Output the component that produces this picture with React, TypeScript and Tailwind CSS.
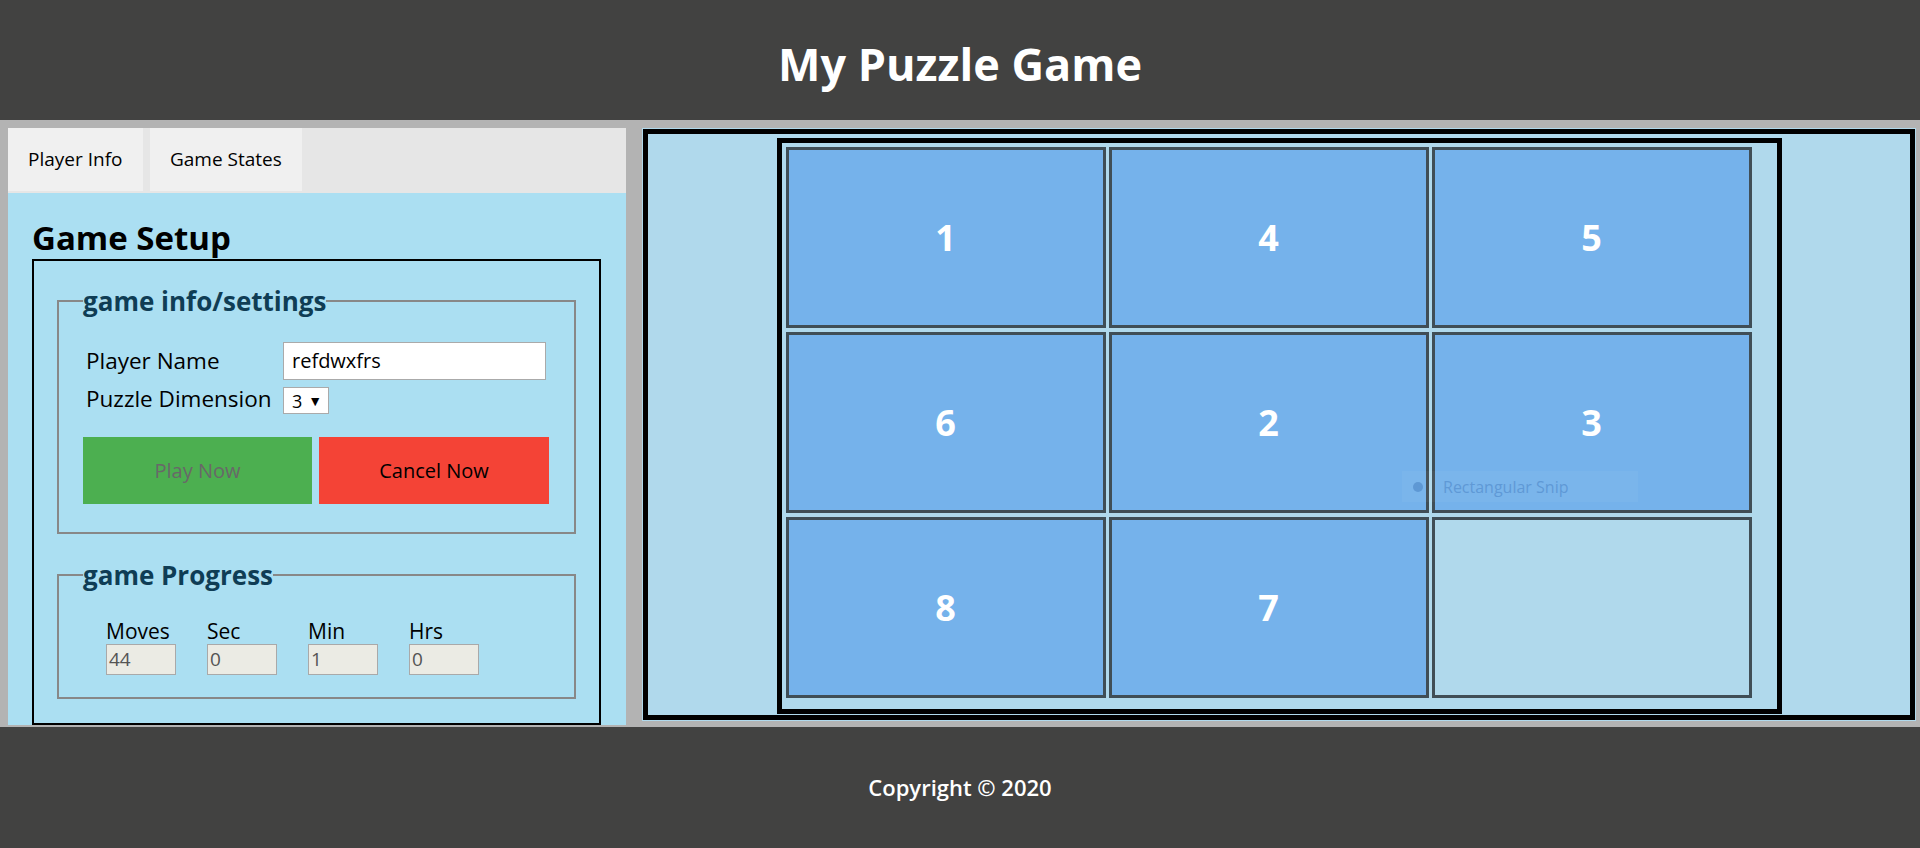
import React from 'react';

const tiles = ['1', '4', '5', '6', '2', '3', '8', '7', ''];

function Tile({ label }: { label: string }) {
  if (!label) {
    return <div className="h-[181px] border-[3px] border-[#404e56] bg-[#b0d9ec]" />;
  }
  return (
    <div className="h-[181px] border-[3px] border-[#404e56] bg-[#75b2eb] flex items-center justify-center">
      <span className="text-[36px] font-bold text-white leading-none">{label}</span>
    </div>
  );
}

function ProgressField({ label, value }: { label: string; value: string }) {
  return (
    <div className="w-[70px]">
      <div className="text-[21px] leading-[24px] text-black">{label}</div>
      <div className="mt-[1px] h-[31px] border border-[#a9a9a9] bg-[#ebebe4] px-[2px] text-[19px] leading-[29px] text-[#545454]">
        {value}
      </div>
    </div>
  );
}

function App() {
  return (
    <div className="relative h-[848px] bg-[#b3b3b3] font-['Open_Sans',sans-serif] overflow-hidden">
      <header className="h-[120px] bg-[#424241] flex items-center justify-center pt-[6px]">
        <h1 className="text-[45px] font-bold text-white leading-none">My Puzzle Game</h1>
      </header>

      <main className="h-[607px] flex items-start pt-2 pl-2 gap-4">
        {/* left panel */}
        <div className="w-[618px] h-[597px] bg-[#abdff2] flex flex-col">
          <div className="h-[65px] bg-[#e6e6e6] flex gap-[7px]">
            <div className="w-[135px] h-[63px] bg-[#f0f0f0] pl-5 flex items-center text-[19px] text-black">
              Player Info
            </div>
            <div className="w-[152px] h-[63px] bg-[#f0f0f0] pl-5 flex items-center text-[19px] text-black">
              Game States
            </div>
          </div>

          <div className="pl-6 pt-[25px]">
            <h2 className="text-[33px] font-bold leading-[40px] mb-[1px] text-black">Game Setup</h2>
            <div className="w-[569px] h-[466px] border-2 border-black pt-[26px] px-[23px]">
              <fieldset className="border-2 border-[#888888] pl-6 pr-6 pt-[27px] pb-[28px]">
                <legend className="text-[26px] font-bold leading-[28px] text-[#0f3d55]">game info/settings</legend>
                <div className="flex items-center h-[38px]">
                  <div className="w-[200px] pl-[3px] text-[22.5px] text-black">Player Name</div>
                  <div className="w-[263px] h-[38px] bg-white border border-[#aaaaaa] pl-2 flex items-center text-[20px] text-black">
                    refdwxfrs
                  </div>
                </div>
                <div className="flex items-center h-[27px] mt-[7px]">
                  <div className="w-[200px] pl-[3px] pb-[4px] text-[22.5px] text-black">Puzzle Dimension</div>
                  <div className="w-[46px] h-[27px] bg-white border border-[#aaaaaa] pl-2 flex items-center gap-[6px] text-black">
                    <span className="text-[18px] leading-none">3</span>
                    <span className="text-[14px] leading-none">▼</span>
                  </div>
                </div>
                <div className="flex gap-[7px] mt-[23px]">
                  <div className="w-[229px] h-[67px] bg-[#4caf50] flex items-center justify-center text-[20px] text-[#686868]">
                    Play Now
                  </div>
                  <div className="w-[230px] h-[67px] bg-[#f44336] flex items-center justify-center text-[20px] text-black">
                    Cancel Now
                  </div>
                </div>
              </fieldset>

              <fieldset className="mt-[27px] border-2 border-[#888888] pl-6 pt-[30px] pb-[22px]">
                <legend className="text-[26px] font-bold leading-[28px] text-[#0f3d55]">game Progress</legend>
                <div className="flex gap-[31px] pl-[23px]">
                  <ProgressField label="Moves" value="44" />
                  <ProgressField label="Sec" value="0" />
                  <ProgressField label="Min" value="1" />
                  <ProgressField label="Hrs" value="0" />
                </div>
              </fieldset>
            </div>
          </div>
        </div>

        {/* right panel */}
        <div className="w-[1274px] bg-[#b0d9ec] p-[1px]">
          <div className="border-[5px] border-black bg-[#b0d9ec] pt-1 pb-[1px]">
            <div className="mx-auto w-[1005px] h-[576px] border-[5px] border-black bg-[#b0d9ec] pl-1 pt-1">
              <div className="grid grid-cols-[320px_320px_320px] gap-x-[3px] gap-y-[4px]">
                {tiles.map((t, i) => (
                  <Tile key={i} label={t} />
                ))}
              </div>
            </div>
          </div>
        </div>
      </main>

      <footer className="h-[121px] bg-[#424241] flex items-center justify-center">
        <p className="text-[22px] font-semibold text-white">Copyright © 2020</p>
      </footer>

      {/* snipping tool tooltip caught in the screenshot */}
      <div className="absolute left-[1402px] top-[471px] w-[236px] h-[31px] bg-white/[0.04] flex items-center">
        <span className="ml-[11px] w-[10px] h-[10px] rounded-full bg-[#5e98d4]" />
        <span className="ml-[20px] text-[16px] text-[#5f99d6]">Rectangular Snip</span>
      </div>
    </div>
  );
}

export default App;
